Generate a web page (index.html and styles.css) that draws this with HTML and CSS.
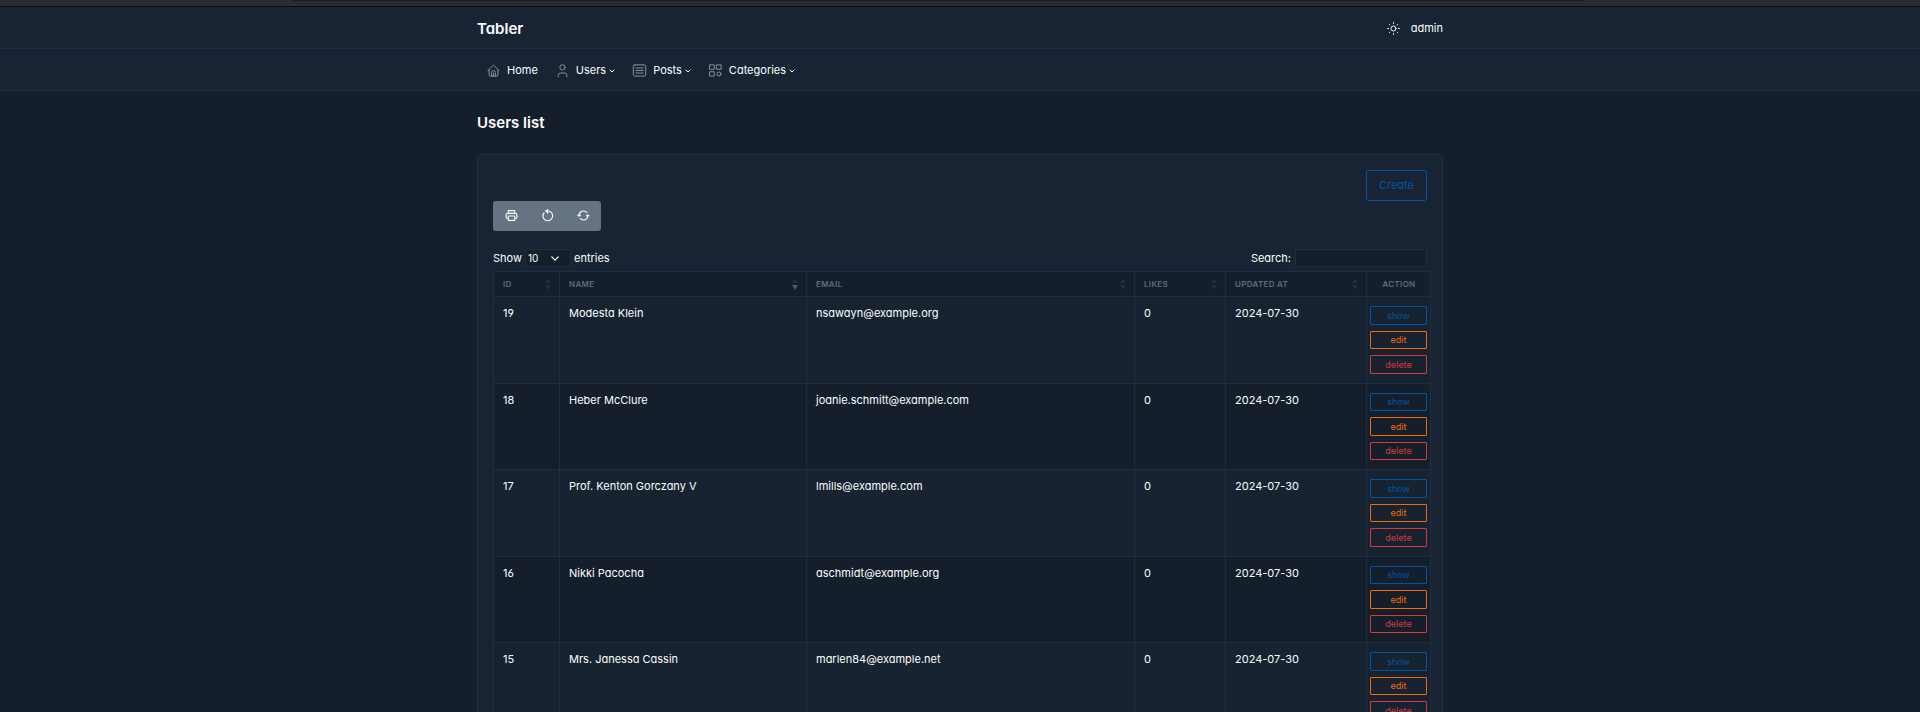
FILE: index.html
```html
<!DOCTYPE html>
<html lang="en">
<head>
<meta charset="utf-8">
<title>Users list</title>
<link rel="stylesheet" href="styles.css">
</head>
<body>
<div class="window-edge"><div class="window-tab"></div></div>

<header class="topbar">
  <div class="container topbar-inner">
    <a class="brand" href="#">Tabler</a>
    <div class="account">
      <button class="theme-button" type="button" aria-label="Toggle theme">
        <svg class="icon" viewBox="0 0 24 24"><circle cx="12" cy="12" r="4"/><path d="M2.500 12h1.500M20 12h1.500M12 2.500v1.500M12 20v1.500M5.500 5.500l.7.7M17.800 17.800l.7.7M5.500 18.500l.7-.7M17.800 6.200l.7-.7"/></svg>
      </button>
      <a class="account-name" href="#">admin</a>
    </div>
  </div>
</header>

<nav class="navbar">
  <div class="container nav-list">
    <a class="nav-item" href="#">
      <svg class="icon" viewBox="0 0 24 24"><path d="M3 12.500L11 4Q12 3 13 4L21 12.500M5 11v8q0 2 2 2h10q2 0 2-2v-8M9 21v-6q0-3 3-3t3 3v6M12 16v5"/></svg>
      <span>Home</span>
    </a>
    <a class="nav-item" href="#">
      <svg class="icon" viewBox="0 0 24 24"><circle cx="12" cy="7" r="4.200"/><path d="M5 22v-2q0-4 4-4h6q4 0 4 4v2"/></svg>
      <span>Users</span>
      <svg class="caret" viewBox="0 0 6 6"><path d="M1 2l2 2 2-2"/></svg>
    </a>
    <a class="nav-item" href="#">
      <svg class="icon" viewBox="0 0 24 24"><rect x="2" y="3" width="20" height="18" rx="2.500"/><path d="M6 8h12M6 12h12M6 16h12"/></svg>
      <span>Posts</span>
      <svg class="caret" viewBox="0 0 6 6"><path d="M1 2l2 2 2-2"/></svg>
    </a>
    <a class="nav-item" href="#">
      <svg class="icon" viewBox="0 0 24 24"><rect x="3" y="3" width="7" height="7"/><rect x="14" y="3" width="7" height="7"/><rect x="3" y="14" width="7" height="7"/><circle cx="17.500" cy="17.500" r="3.200"/></svg>
      <span>Categories</span>
      <svg class="caret" viewBox="0 0 6 6"><path d="M1 2l2 2 2-2"/></svg>
    </a>
  </div>
</nav>

<main class="container">
  <h1 class="page-title">Users list</h1>
  <section class="card">
    <div class="card-actions"><button class="create-button" type="button">Create</button></div>
    <div class="tool-group">
      <button type="button" aria-label="Print"><svg class="tool-icon" viewBox="0 0 24 24"><path d="M6 8V3h12v5M6 17H4q-2 0-2-2v-4q0-3 3-3h14q3 0 3 3v4q0 2-2 2h-2M6 13h12v8H6z"/></svg></button>
      <button type="button" aria-label="Reset"><svg class="tool-icon" viewBox="0 0 24 24"><path d="M5.500 7A9 9 0 1 0 15 4"/><path class="solid" d="M8 3l5-2v7z"/></svg></button>
      <button type="button" aria-label="Reload"><svg class="tool-icon" viewBox="0 0 24 24"><path d="M4 12A8 8 0 0 1 18 6.500M20 12A8 8 0 0 1 6 17.500"/><path class="solid" d="M1 11h6l-3 3zM17 13h6l-3-3z"/></svg></button>
    </div>
    <div class="filters">
      <label class="length">Show
        <span class="select-box">
          <select><option>10</option><option>25</option><option>50</option></select>
          <svg viewBox="0 0 10 6"><path d="M1 1l4 4 4-4"/></svg>
        </span>
        entries</label>
      <label class="search">Search: <input type="search"></label>
    </div>
    <div class="table-wrap">
      <table class="users">
        <colgroup><col class="col-id"><col class="col-name"><col><col class="col-likes"><col class="col-updated"><col class="col-action"></colgroup>
        <thead>
          <tr>
            <th><button type="button">ID<svg viewBox="0 0 6 12"><path class="up" d="M0 5l3-4 3 4z"/><path class="down" d="M0 7l3 5 3-5z"/></svg></button></th>
            <th aria-sort="descending"><button type="button">Name<svg viewBox="0 0 6 12"><path class="up" d="M0 5l3-4 3 4z"/><path class="down" d="M0 7l3 5 3-5z"/></svg></button></th>
            <th><button type="button">Email<svg viewBox="0 0 6 12"><path class="up" d="M0 5l3-4 3 4z"/><path class="down" d="M0 7l3 5 3-5z"/></svg></button></th>
            <th><button type="button">Likes<svg viewBox="0 0 6 12"><path class="up" d="M0 5l3-4 3 4z"/><path class="down" d="M0 7l3 5 3-5z"/></svg></button></th>
            <th><button type="button">Updated at<svg viewBox="0 0 6 12"><path class="up" d="M0 5l3-4 3 4z"/><path class="down" d="M0 7l3 5 3-5z"/></svg></button></th>
            <th class="action-head">Action</th>
          </tr>
        </thead>
        <tbody>
          <tr><td>19</td><td>Modesta Klein</td><td>nsawayn@example.org</td><td>0</td><td>2024-07-30</td>
            <td class="actions"><div><button class="show" type="button">show</button><button class="edit" type="button">edit</button><button class="delete" type="button">delete</button></div></td></tr>
          <tr><td>18</td><td>Heber McClure</td><td>joanie.schmitt@example.com</td><td>0</td><td>2024-07-30</td>
            <td class="actions"><div><button class="show" type="button">show</button><button class="edit" type="button">edit</button><button class="delete" type="button">delete</button></div></td></tr>
          <tr><td>17</td><td>Prof. Kenton Gorczany V</td><td>lmills@example.com</td><td>0</td><td>2024-07-30</td>
            <td class="actions"><div><button class="show" type="button">show</button><button class="edit" type="button">edit</button><button class="delete" type="button">delete</button></div></td></tr>
          <tr><td>16</td><td>Nikki Pacocha</td><td>aschmidt@example.org</td><td>0</td><td>2024-07-30</td>
            <td class="actions"><div><button class="show" type="button">show</button><button class="edit" type="button">edit</button><button class="delete" type="button">delete</button></div></td></tr>
          <tr><td>15</td><td>Mrs. Janessa Cassin</td><td>marlen84@example.net</td><td>0</td><td>2024-07-30</td>
            <td class="actions"><div><button class="show" type="button">show</button><button class="edit" type="button">edit</button><button class="delete" type="button">delete</button></div></td></tr>
        </tbody>
      </table>
    </div>
  </section>
</main>
</body>
</html>
```

FILE: styles.css
```css
:root {
  --body: #151f2c;
  --surface: #182433;
  --line: #1f2e41;
  --text: #fcfdfe;
  --muted: #5d6b7d;
}
* { box-sizing: border-box; }
html { scrollbar-width: none; }
body {
  margin: 0;
  background: var(--body);
  color: var(--text);
  font-family: Inter, "Liberation Sans", sans-serif;
  font-feature-settings: "cv03", "cv04", "cv11";
  font-size: 11px;
  line-height: 15px;
}
a { color: inherit; text-decoration: none; }
button, input, select {
  font: inherit;
  font-feature-settings: inherit;
  color: inherit;
  margin: 0;
  padding: 0;
  border: 0;
  background: none;
}
svg { display: block; fill: none; stroke: currentColor; stroke-linecap: round; stroke-linejoin: round; }

.container { width: 100%; max-width: 966px; margin: 0 auto; }

.window-edge { height: 7px; background: #2c2a33; border-bottom: 1px solid #0c0d12; }
.window-tab { width: 67.3%; height: 1px; margin: 0 auto; margin-left: 15.2%; background: #1c1b22; }

.topbar, .navbar { background: var(--surface); border-bottom: 1px solid var(--line); }
.topbar-inner, .nav-list { display: flex; align-items: center; height: 41px; padding-top: 2px; }
.topbar-inner { justify-content: space-between; }
.brand { font-size: 15px; font-weight: 600; line-height: 20px; }
.account { display: flex; align-items: center; gap: 10px; }
.theme-button { display: block; }
.icon { width: 15px; height: 15px; stroke-width: 1.5; }

.nav-list { gap: 17px; padding-left: 9px; }
.nav-item { display: flex; align-items: center; }
.nav-item .icon { margin-right: 6px; color: #8d97a5; }
.caret { width: 6px; height: 6px; margin-left: 3px; }

.page-title { margin: 0; padding: 22px 0 21px; font-size: 15px; font-weight: 600; line-height: 20px; }

.card { padding: 15px; background: var(--surface); border: 1px solid var(--line); border-radius: 3px; }
.card-actions { display: flex; justify-content: flex-end; }
.create-button { height: 31px; padding: 0 12px; border: 1px solid #0054a6; border-radius: 3px; color: #0054a6; }
.tool-group { display: flex; width: fit-content; height: 30px; background: #667382; border-radius: 3px; }
.tool-group button { display: grid; place-items: center; width: 36px; padding-bottom: 1px; }
.tool-icon { width: 13px; height: 13px; stroke-width: 2; }
.solid { fill: currentColor; stroke-width: 1; }

.filters { display: flex; justify-content: space-between; margin: 18px 0 4px; }
.length, .search { display: flex; align-items: center; height: 18px; }
.length { gap: 3px; }
.search { gap: 4px; }
.select-box { display: grid; align-items: center; }
.select-box select, .search input { height: 18px; background: var(--body); border: 1px solid var(--line); border-radius: 1px; }
.select-box select { grid-area: 1 / 1; width: 46px; padding-left: 2px; font-size: 10px; appearance: none; }
.select-box svg { grid-area: 1 / 1; justify-self: end; width: 8px; height: 5px; margin-right: 12px; stroke-width: 1.5; pointer-events: none; }
.search input { width: 132px; padding: 0 3px; appearance: none; }

.table-wrap { margin-right: -4px; }
.users { width: 100%; table-layout: fixed; border-collapse: collapse; }
.users th, .users td { padding: 9px; border: 1px solid var(--line); text-align: left; vertical-align: top; }
.users th { padding: 6px 8px 6px 9px; background: var(--body); color: var(--muted); font-size: 8px; font-weight: 600; line-height: 12px; text-transform: uppercase; letter-spacing: 0.04em; }
.users th button { display: flex; align-items: center; justify-content: space-between; width: 100%; text-transform: inherit; letter-spacing: inherit; }
.users th svg { width: 6px; height: 12px; fill: #222f3f; stroke: none; }
.users th[aria-sort] .down { fill: #4a5768; }
.users .action-head { text-align: center; }
.col-id { width: 66px; }
.col-name { width: 247px; }
.col-likes { width: 91px; }
.col-updated { width: 141px; }
.col-action { width: 64px; }
.users tbody tr { background: var(--body); }
.users tbody tr:nth-child(odd) { background: #172330; }

.users .actions { padding: 9px 3px; }
.actions div { display: grid; gap: 6px; grid-template-rows: 18px 19px 18px; }
tr:nth-child(odd) .actions div { grid-template-rows: 19px 18px 19px; }
.actions button { border: 1px solid; border-radius: 1px; font-size: 9px; line-height: 12px; }
.show { color: #0054a6; }
.edit { color: #f76707; }
.delete { color: #d63939; }
```
